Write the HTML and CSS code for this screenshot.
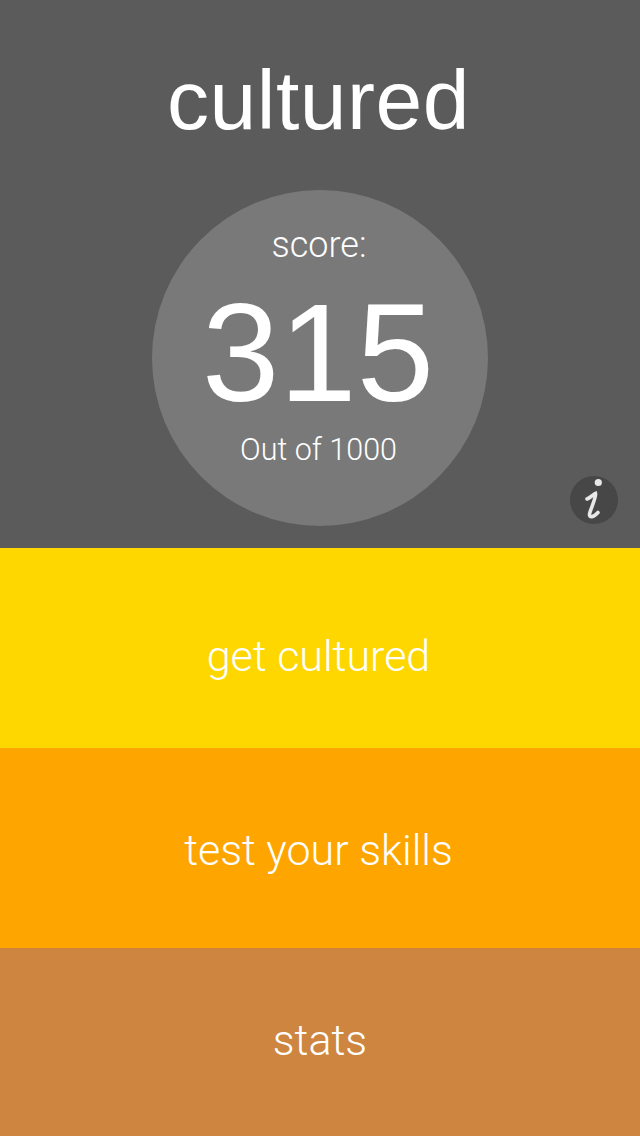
FILE: index.html
```html
<!DOCTYPE html>
<html lang="en">
<head>
    <meta charset="UTF-8">
    <meta name="viewport" content="width=device-width, initial-scale=1.0">
    <title>cultured</title>
    <link rel="stylesheet" href="styles.css">
</head>
<body>
    <div class="header">
        <h1 class="title">cultured</h1>
        <div class="score-circle">
            <div class="score-label">score:</div>
            <div class="score-value">315</div>
            <div class="score-total">Out of 1000</div>
        </div>
        <svg class="info-btn" width="48" height="48" viewBox="0 0 48 48">
            <circle cx="24" cy="24" r="24" fill="#474747"/>
            <circle cx="28.3" cy="6.5" r="3.6" fill="#e8e8e8"/>
            <path d="M17 23 C20 22 23 18.5 25.5 17.5 C26.5 21 20.5 33 19.5 38 C19 42 23.5 41.5 28 36.5" fill="none" stroke="#e8e8e8" stroke-width="3.6" stroke-linecap="round"/>
        </svg>
    </div>

    <div class="menu-item menu-yellow">get cultured</div>
    <div class="menu-item menu-orange">test your skills</div>
    <div class="menu-item menu-tan">stats</div>
</body>
</html>
```

FILE: styles.css
```css
body {
    margin: 0;
    width: 640px;
    height: 1136px;
    overflow: hidden;
    font-family: "Liberation Sans", Arial, sans-serif;
    color: #fff;
}

.header {
    position: relative;
    height: 548px;
    background-color: #5b5b5b;
    display: flex;
    flex-direction: column;
    align-items: center;
}

.title {
    margin: 0 3px 0 0;
    height: 190px;
    font-size: 84px;
    font-weight: 400;
    line-height: 200px;
    letter-spacing: 0.5px;
}

.score-circle {
    width: 336px;
    height: 336px;
    border-radius: 50%;
    background-color: #797979;
    display: flex;
    flex-direction: column;
    align-items: center;
}

.score-label {
    margin: 34px 2px 0 0;
    font-family: Roboto, sans-serif;
    font-weight: 300;
    font-size: 36px;
    line-height: 42px;
}

.score-value {
    margin: 17px 4px 0 0;
    font-size: 139px;
    line-height: 140px;
}

.score-total {
    margin: 8px 3px 0 0;
    font-family: Roboto, sans-serif;
    font-weight: 300;
    font-size: 30.5px;
    line-height: 38px;
}

/* small round info button, sits over the corner of the header */
.info-btn {
    position: absolute;
    left: 570px;
    top: 476px;
    filter: blur(0.6px);
}

.menu-item {
    height: 200px;
    display: flex;
    align-items: center;
    justify-content: center;
    font-family: Roboto, sans-serif;
    font-weight: 300;
    font-size: 43px;
    box-sizing: border-box;
}

.menu-yellow {
    background-color: #ffd700;
    padding: 16px 3px 0 0;
}

.menu-orange {
    background-color: #ffa500;
    padding: 4px 3px 0 0;
}

.menu-tan {
    height: 188px;
    background-color: #cd853f;
    padding-bottom: 4px;
}
```
